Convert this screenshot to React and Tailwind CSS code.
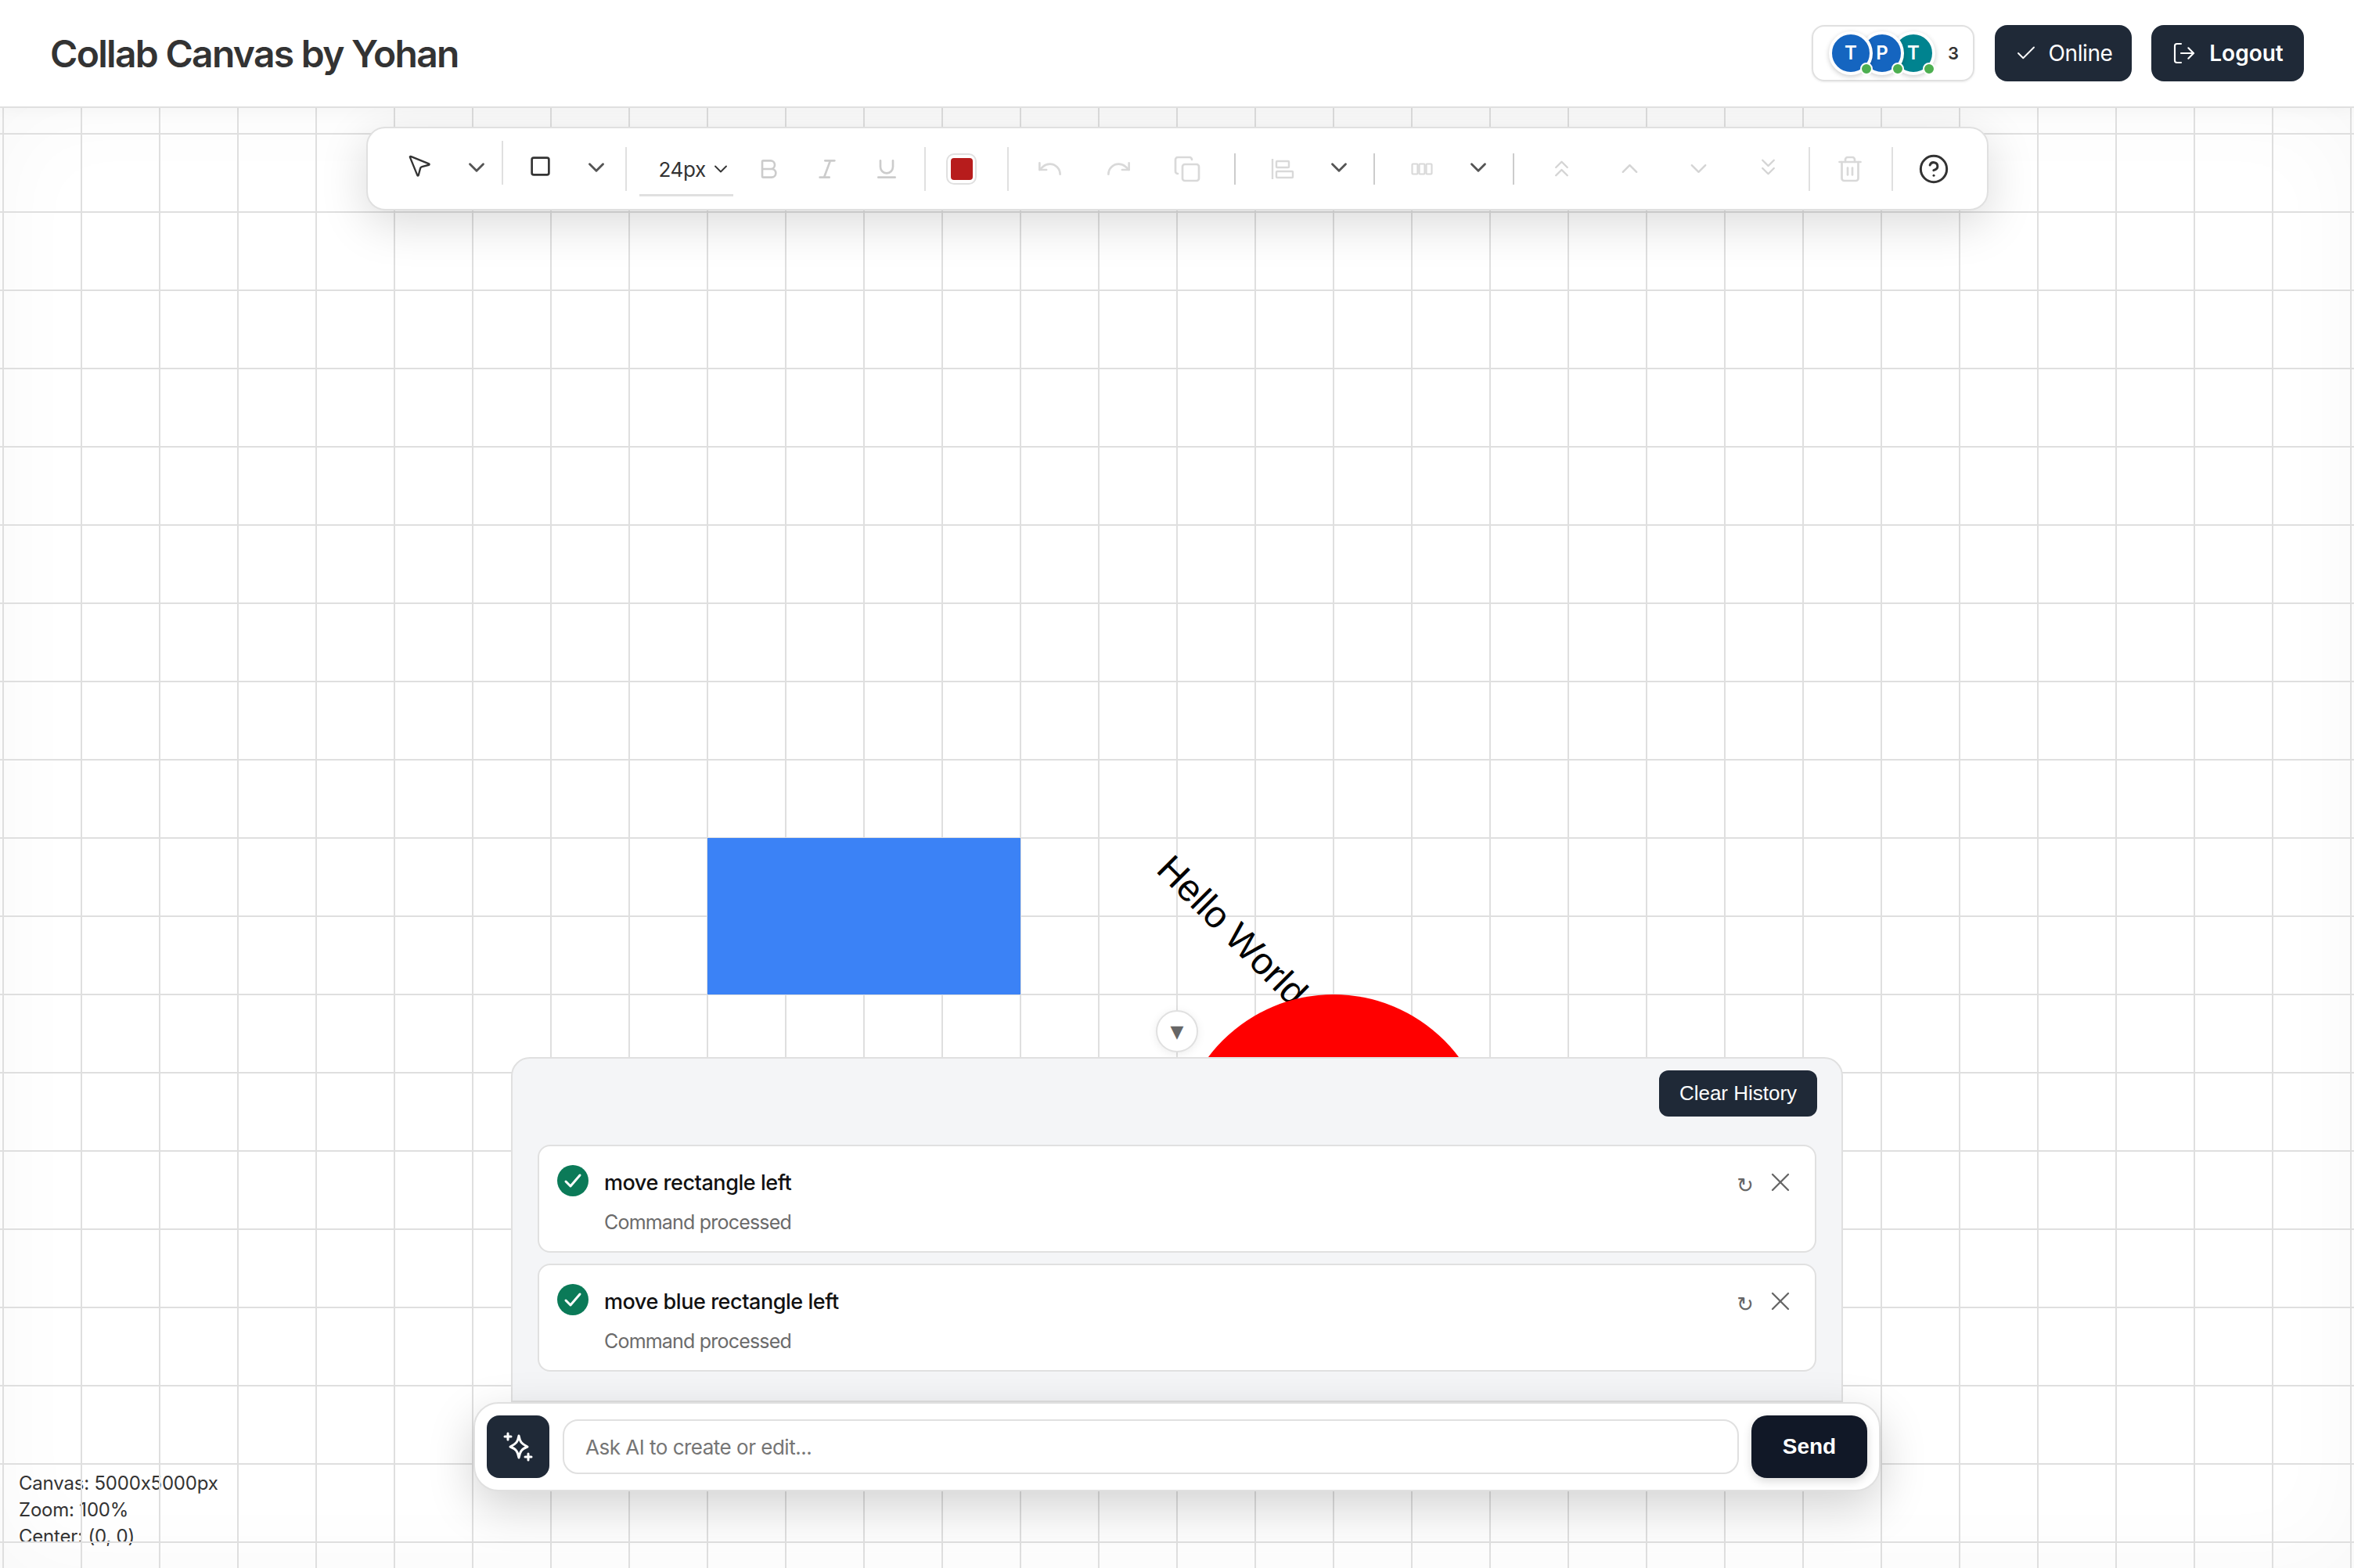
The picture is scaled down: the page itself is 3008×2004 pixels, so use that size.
import {
  MousePointer2, ChevronDown, ChevronUp, ChevronsUp, ChevronsDown, Square, Bold, Italic, Underline,
  Undo, Redo, Copy, Trash2, CircleHelp, Check, LogOut, X,
} from 'lucide-react'

const Sep = ({ className }) => <div className={`w-[2px] shrink-0 ${className}`} />

const Caret = ({ className }) => (
  <div className={`w-[24px] flex justify-center shrink-0 mb-[4px] ${className}`}>
    <ChevronDown size={34} className="text-[#555] shrink-0" />
  </div>
)

const Tool = ({ className, children }) => (
  <div className={`w-[48px] flex justify-center shrink-0 ${className}`}>{children}</div>
)

function Avatar({ letter, color, className }) {
  return (
    <div className={`relative w-[56px] h-[56px] rounded-full border-4 border-white shadow-[0_2px_6px_rgba(0,0,0,0.2)] flex items-center justify-center text-white text-[24px] font-semibold ${color} ${className}`}>
      {letter}
      <span className="absolute right-[-4px] bottom-[-4px] w-4 h-4 rounded-full bg-[#4caf50] border-2 border-white" />
    </div>
  )
}

function HistoryItem({ text }) {
  return (
    <div className="h-[138px] bg-white border-2 border-[#e0e0e0] rounded-2xl flex pl-[23px] pt-[24px]">
      <svg width="40" height="40" viewBox="0 0 40 40" className="shrink-0">
        <circle cx="20" cy="20" r="20" fill="#0b7a58" />
        <path d="M11 21l6 6 12-14" fill="none" stroke="#fff" strokeWidth="3" strokeLinecap="round" strokeLinejoin="round" />
      </svg>
      <div className="ml-[20px] flex-1">
        <div className="text-[27px] leading-[40px] font-[450] text-[#111] tracking-[-0.45px] mt-[3px]">{text}</div>
        <div className="text-[25px] leading-[36px] text-[#6b6b6b] tracking-[-0.8px] mt-[12px]">Command processed</div>
      </div>
      <div className="flex items-start shrink-0 pr-[24px]">
        <span className="text-[26px] leading-[26px] text-[#666] font-['DejaVu_Sans',sans-serif] mt-[5px] mr-[14px] pt-[8px]">↻</span>
        <X size={40} strokeWidth={1.4} className="text-[#666] mt-[2px]" />
      </div>
    </div>
  )
}

export default function App() {
  return (
    <div className="w-[3008px] h-[2004px] overflow-hidden flex flex-col bg-white font-['Inter',sans-serif] text-[#333]">
      {/* Header */}
      <header className="relative z-20 h-[138px] shrink-0 bg-white border-b-2 border-[#e0e0e0] shadow-[0_2px_20px_rgba(0,0,0,0.04)] flex items-center justify-between pl-[64px] pr-[64px]">
        <h1 className="text-[48px] font-semibold text-[#333] tracking-[-1.7px] mt-[1px]">Collab Canvas by Yohan</h1>
        <div className="flex items-center h-[72px]">
          <div className="h-[72px] w-[208px] border-2 border-[#e0e0e0] rounded-2xl shadow-[0_1px_3px_rgba(0,0,0,0.08)] flex items-center pl-[20px]">
            <Avatar letter="T" color="bg-[#1565c0]" className="z-30" />
            <Avatar letter="P" color="bg-[#1565c0]" className="z-20 -ml-[16px]" />
            <Avatar letter="T" color="bg-[#00838f]" className="z-10 -ml-[16px]" />
            <span className="ml-[16px] text-[22px] font-semibold text-[#333]">3</span>
          </div>
          <div className="ml-[26px] w-[175px] h-[72px] rounded-2xl bg-[#1f2937] text-white flex items-center justify-center gap-[14px] text-[28px] tracking-[-0.4px]">
            <Check size={30} strokeWidth={1.5} />
            Online
          </div>
          <div className="ml-[25px] w-[195px] h-[72px] rounded-2xl bg-[#1f2937] text-white flex items-center justify-center gap-[16px] text-[28px] font-semibold">
            <LogOut size={32} strokeWidth={1.6} />
            Logout
          </div>
        </div>
      </header>

      {/* Canvas */}
      <main className="relative flex-1 bg-white overflow-hidden shadow-[inset_0_0_120px_rgba(0,0,0,0.03)]">
        <div className="absolute left-[24px] top-[1741px] text-[24px] leading-[34px] tracking-[-0.2px] text-[#333] [font-feature-settings:'calt'_0]">
          <div>Canvas: 5000x5000px</div>
          <div>Zoom: 100%</div>
          <div>Center: (0, 0)</div>
        </div>

        {/* grid */}
        <div className="absolute inset-0 bg-[linear-gradient(to_right,#dfdfdf_2px,transparent_2px),linear-gradient(to_bottom,#dfdfdf_2px,transparent_2px)] bg-[size:100px_100px] bg-[position:3px_32px]" />

        {/* shapes */}
        <div className="absolute left-[904px] top-[933px] w-[400px] h-[200px] bg-[#3b82f6]" />
        <div className="absolute left-[1504px] top-[947px] origin-top-left rotate-45 text-[48px] leading-[48px] whitespace-nowrap text-black font-['Liberation_Sans',sans-serif]">Hello World</div>
        <div className="absolute left-[1504px] top-[1133px] w-[400px] h-[400px] rounded-full bg-[#ff0000]" />

        {/* Toolbar */}
        <div className="absolute left-[468px] top-[24px] z-10 h-[107px] bg-white border-2 border-[#e0e0e0] rounded-3xl shadow-[0_16px_60px_rgba(0,0,0,0.15)] flex items-center pl-[41px] pr-[44px]">
          <Tool className="mb-[8px]"><MousePointer2 size={35} strokeWidth={1.6} className="text-[#333]" /></Tool>
          <Caret className="ml-[38px]" />
          <Sep className="ml-[20px] h-[56px] mb-[16px] bg-[#e0e0e0]" />
          <Tool className="ml-[23px] mb-[6px]"><Square size={29} strokeWidth={2.2} className="text-[#333]" /></Tool>
          <Caret className="ml-[36px]" />
          <Sep className="ml-[25px] h-[56px] bg-[#e0e0e0]" />
          <div className="ml-[16px] w-[120px] h-[64px] shrink-0 border-b-[3px] border-[#e0e0e0] flex items-center justify-end gap-[5px] pb-[2px] translate-y-[3px]">
            <span className="text-[26px] text-[#333] tracking-[-0.3px]">24px</span>
            <ChevronDown size={28} strokeWidth={1.6} className="text-[#333] mr-[2px]" />
          </div>
          <Tool className="ml-[21px]"><Bold size={32} strokeWidth={2} className="text-[#ccc]" /></Tool>
          <Tool className="ml-[27px]"><Italic size={32} strokeWidth={2} className="text-[#ccc]" /></Tool>
          <Tool className="ml-[28px]"><Underline size={32} strokeWidth={2} className="text-[#ccc]" /></Tool>
          <Sep className="ml-[24px] h-[56px] bg-[#e0e0e0]" />
          <div className="ml-[26px] w-[39px] h-[40px] shrink-0 border-2 border-[#e0e0e0] rounded-[10px] flex items-center justify-center">
            <div className="w-[28px] h-[28px] rounded-[4px] bg-[#b71c1c]" />
          </div>
          <Sep className="ml-[39px] h-[56px] bg-[#e0e0e0]" />
          <Tool className="ml-[28px]"><Undo size={35} strokeWidth={1.8} className="text-[#d9d9d9]" /></Tool>
          <Tool className="ml-[40px]"><Redo size={35} strokeWidth={1.8} className="text-[#d9d9d9]" /></Tool>
          <Tool className="ml-[40px]"><Copy size={36} strokeWidth={1.8} className="text-[#d9d9d9]" /></Tool>
          <Sep className="ml-[36px] h-[40px] bg-[#ccc]" />
          <Tool className="ml-[36px]">
            <svg width="30" height="28" viewBox="0 0 30 28" fill="none" stroke="#d9d9d9" strokeWidth="2.4">
              <path d="M2 1v26" />
              <rect x="7" y="4" width="16" height="8" rx="1" />
              <rect x="7" y="17" width="21" height="8" rx="1" />
            </svg>
          </Tool>
          <Caret className="ml-[36px]" />
          <Sep className="ml-[32px] h-[40px] bg-[#ccc]" />
          <Tool className="ml-[36px]">
            <svg width="28" height="16" viewBox="0 0 28 16" fill="none" stroke="#d9d9d9" strokeWidth="2.2">
              <rect x="1.5" y="1.5" width="7" height="13" rx="1" />
              <rect x="10.5" y="1.5" width="7" height="13" rx="1" />
              <rect x="19.5" y="1.5" width="7" height="13" rx="1" />
            </svg>
          </Tool>
          <Caret className="ml-[36px]" />
          <Sep className="ml-[32px] h-[40px] bg-[#ccc]" />
          <Tool className="ml-[36px]"><ChevronsUp size={35} strokeWidth={1.6} className="text-[#d4d4d4]" /></Tool>
          <Tool className="ml-[39px]"><ChevronUp size={35} strokeWidth={1.6} className="text-[#d4d4d4]" /></Tool>
          <Tool className="ml-[40px]"><ChevronDown size={35} strokeWidth={1.6} className="text-[#d4d4d4]" /></Tool>
          <Tool className="ml-[41px] mb-[4px]"><ChevronsDown size={35} strokeWidth={1.6} className="text-[#d4d4d4]" /></Tool>
          <Sep className="ml-[28px] h-[56px] bg-[#e0e0e0]" />
          <Tool className="ml-[27px]"><Trash2 size={36} strokeWidth={1.8} className="text-[#d9d9d9]" /></Tool>
          <Sep className="ml-[29px] h-[56px] bg-[#e0e0e0]" />
          <Tool className="ml-[28px]"><CircleHelp size={40} strokeWidth={1.8} className="text-[#333]" /></Tool>
        </div>

        {/* AI panel */}
        <div className="absolute inset-x-0 bottom-[98px] z-10 flex flex-col items-center">
          <div className="w-[54px] h-[54px] rounded-full bg-white border-2 border-[#e0e0e0] shadow-[0_2px_12px_rgba(0,0,0,0.08)] flex items-center justify-center text-[#666] text-[22px] font-['DejaVu_Sans',sans-serif] mb-[6px]">▼</div>
          <div className="w-[1702px] h-[441px] bg-[#f4f5f7] border-2 border-[#e0e0e0] rounded-t-3xl px-[32px] pt-[15px]">
            <div className="flex justify-end">
              <div className="w-[202px] h-[59px] translate-x-[1px] rounded-xl bg-[#1f2937] text-white flex items-center justify-center text-[26px] font-['Liberation_Sans',sans-serif]">Clear History</div>
            </div>
            <div className="mt-[36px] flex flex-col gap-[14px]">
              <HistoryItem text="move rectangle left" />
              <HistoryItem text="move blue rectangle left" />
            </div>
          </div>
          <div className="w-[1798px] h-[114px] bg-white border-2 border-[#e0e0e0] rounded-[32px] shadow-[0_20px_60px_rgba(0,0,0,0.18)] flex items-center pl-[15px] pr-[15px]">
            <div className="w-[80px] h-[80px] rounded-2xl bg-[#1f2937] flex items-center justify-center shrink-0">
              <svg width="38" height="38" viewBox="0 0 38 38" fill="none" stroke="#fff" strokeLinecap="round" strokeLinejoin="round">
                <path d="M20 5c1.500 8 3.500 10.500 11 14-7.500 3-9.500 6-11 14-1.500-8-3.500-11-11-14 7.500-3.500 9.500-6 11-14z" strokeWidth="3" />
                <path d="M6 2v8M2 6h8M32 28v8M28 32h8" strokeWidth="3" />
              </svg>
            </div>
            <div className="ml-[17px] flex-1 h-[70px] border-2 border-[#e0e0e0] rounded-[20px] flex items-center pl-[27px] text-[26px] tracking-[-0.5px] text-[#757575]">Ask AI to create or edit...</div>
            <div className="ml-[16px] w-[148px] h-[80px] rounded-[20px] bg-[#111827] shadow-[0_4px_12px_rgba(0,0,0,0.15)] text-white flex items-center justify-center text-[28px] font-bold font-['Liberation_Sans',sans-serif]">Send</div>
          </div>
        </div>
      </main>
    </div>
  )
}
